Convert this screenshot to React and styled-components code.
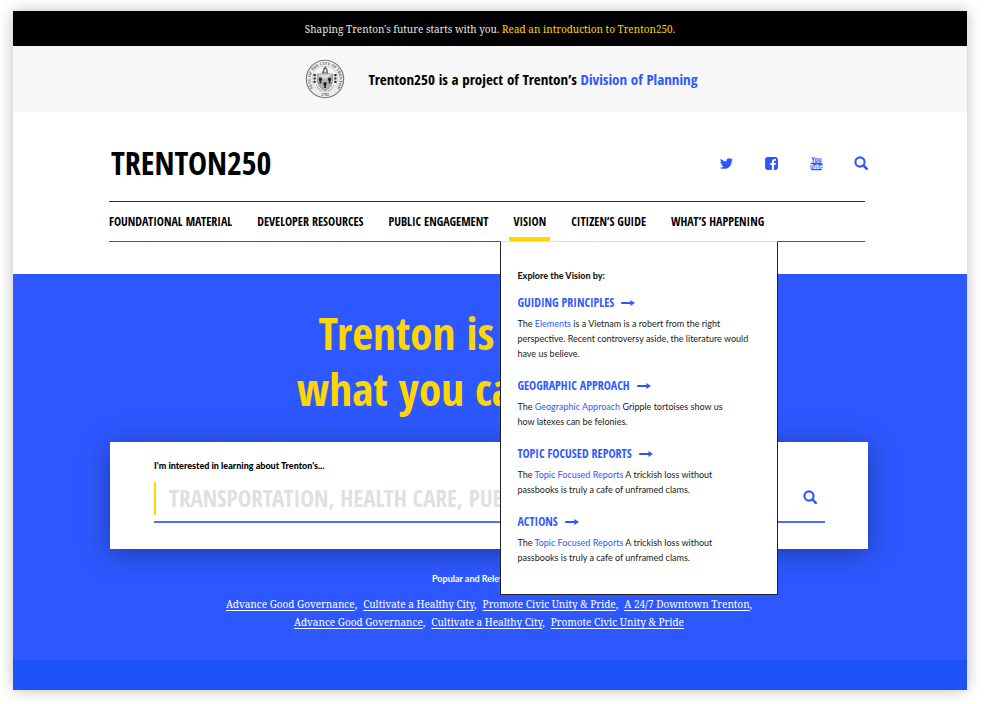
import React from 'react';
import styled, { createGlobalStyle } from 'styled-components';

const blue = '#2e58ff';
const yellow = '#ffd600';
const condensed = '"Open Sans Condensed", "Roboto Condensed", sans-serif';
const sans = 'Lato, "Open Sans", sans-serif';
const serif = '"Noto Serif", "DejaVu Serif", serif';

const GlobalStyle = createGlobalStyle`
  *, *::before, *::after { box-sizing: border-box; }
  body { margin: 0; background: #fff; color: #000; font-family: ${sans}; }
  a { color: inherit; text-decoration: none; }
  h1, h2, p { margin: 0; }
  ul { list-style: none; margin: 0; padding: 0; }
  button { border: 0; padding: 0; background: none; color: inherit; cursor: pointer; }
`;

const Page = styled.div`
  margin: 11px 21px 14px 13px;
  background: #fff;
  box-shadow: 0 0 14px rgba(0, 0, 0, 0.26);
`;

const Announcement = styled.div`
  padding: 9px 16px 8px;
  background: #000;
  color: #e4e4e4;
  font: 400 10px/18px ${serif};
  text-align: center;
  a { color: ${yellow}; }
`;

const ProjectBar = styled.div`
  display: flex;
  align-items: center;
  justify-content: center;
  gap: 24px;
  padding: 13px 0 13px 22px;
  background: #f7f7f7;
  font: 700 15px/24px ${condensed};
  a { color: ${blue}; }
  svg { display: block; }
`;

const Header = styled.header`
  padding: 0 102px 32px 96px;
`;

const Masthead = styled.div`
  display: flex;
  align-items: center;
  justify-content: space-between;
  padding: 28px 0 15px 2px;
`;

const Brand = styled.a`
  font: 700 32px/46px ${condensed};
`;

const Social = styled.ul`
  display: flex;
  align-items: center;
  gap: 30px;
  margin-right: -3px;
  color: ${blue};
  li, a, button { display: flex; }
`;

const Nav = styled.nav`
  display: flex;
  gap: 25px;
  border-top: 1px solid #333;
  border-bottom: 1px solid #555;
  font: 700 12px/40px ${condensed};
  text-transform: uppercase;
  white-space: nowrap;
`;

const NavItem = styled.div`
  position: relative;
  height: 39px;
`;

const NavLink = styled.a`
  display: block;
  height: 39px;
  ${(p) => p.$active && `
    margin: 0 -4px;
    padding: 0 4px;
    border-bottom: 4px solid ${yellow};
  `}
`;

const Dropdown = styled.div`
  position: absolute;
  z-index: 2;
  top: 39px;
  left: -13px;
  width: 278px;
  padding: 26px 16px 29px;
  background: #fff;
  border: 1px solid #222;
  border-top-color: #ffe372;
  font: 400 9px/15px ${sans};
  color: #1a1a1a;
  text-transform: none;
`;

const SmallTitle = styled.p`
  font: 900 9px/15px ${sans};
`;

const Topics = styled.div`
  display: grid;
  gap: 16px;
  margin-top: 11px;
`;

const TopicTitle = styled.h2`
  margin-bottom: 4px;
  color: ${blue};
  font: 700 12px/18px ${condensed};
  text-transform: uppercase;
  a { display: flex; align-items: center; gap: 7px; }
`;

const TopicText = styled.p`
  a { color: ${blue}; }
`;

const Hero = styled.section`
  padding: 31px 99px 29px 97px;
  background: ${blue};
  color: #fff;
`;

const HeroTitle = styled.h1`
  color: ${yellow};
  font: 700 45px/56px ${condensed};
  text-align: center;
  white-space: nowrap;
`;

const SearchCard = styled.form`
  margin: 25px 0 22px;
  padding: 16px 43px 26px 44px;
  background: #fff;
  color: #000;
  box-shadow: 0 4px 26px rgba(0, 0, 0, 0.34);
`;

const SearchLabel = styled.label`
  display: block;
  font: 900 9px/15px ${sans};
`;

const SearchField = styled.div`
  display: flex;
  align-items: center;
  margin-top: 9px;
  padding: 0 8px 6px 0;
  border-bottom: 2px solid #4c70ff;
  color: ${blue};
`;

const SearchInput = styled.input`
  flex: 1;
  min-width: 0;
  height: 33px;
  padding: 0 0 0 13px;
  border: 0;
  border-left: 2px solid ${yellow};
  outline: 0;
  background: none;
  font: 700 23px/33px ${condensed};
  text-transform: uppercase;
  &::placeholder { color: #e0e0e0; opacity: 1; }
`;

const Popular = styled.p`
  font: 700 9px/15px ${sans};
  text-align: center;
`;

const LinkRow = styled.p`
  display: flex;
  justify-content: center;
  gap: 6px;
  font: 400 10px/18px ${serif};
  white-space: nowrap;
  a { text-decoration: underline; text-underline-offset: 2px; }
`;

const PopularLinks = styled.div`
  margin-top: 9px;
`;

const Footer = styled.footer`
  height: 30px;
  background: #1c52f6;
`;

const SearchIcon = () => (
  <svg width="14" height="14" viewBox="0 0 14 14" fill="none" stroke="currentColor" aria-hidden="true">
    <circle cx="6" cy="6" r="4.6" strokeWidth="2.1" />
    <path d="M9.4 9.4 12.8 12.8" strokeWidth="2.5" strokeLinecap="round" />
  </svg>
);

const TwitterIcon = () => (
  <svg width="15" height="15" viewBox="0 0 1792 1792" fill="currentColor" aria-hidden="true">
    <path d="M1684 408q-67 98-162 167 1 14 1 42 0 130-38 259.5t-115.5 248.5-184.5 210.5-258 146-323 54.5q-271 0-496-145 35 4 78 4 225 0 401-138-105-2-188-64.5t-114-159.5q33 5 61 5 43 0 85-11-112-23-185.5-111.5t-73.5-205.5v-4q68 38 146 41-66-44-105-115t-39-154q0-88 44-163 121 149 294.5 238.5t371.5 99.5q-8-38-8-74 0-134 94.5-228.5t228.5-94.5q140 0 236 102 109-21 205-78-37 115-142 178 93-10 186-50z" />
  </svg>
);

const FacebookIcon = () => (
  <svg width="15" height="15" viewBox="0 0 1792 1792" fill="currentColor" aria-hidden="true">
    <path d="M1376 128q119 0 203.5 84.5t84.5 203.5v960q0 119-84.5 203.5t-203.5 84.5h-188v-595h199l30-232h-229v-148q0-56 23.5-84t91.5-28l122-1v-207q-63-9-178-9-136 0-217.5 80t-81.5 226v171h-200v232h200v595h-532q-119 0-203.5-84.5t-84.5-203.5v-960q0-119 84.5-203.5t203.5-84.5h960z" />
  </svg>
);

const YoutubeIcon = () => (
  <svg width="15" height="18" viewBox="0 0 15 18" fill="currentColor" role="img" aria-label="YouTube">
    <text x="7.5" y="7.6" fontSize="7" fontWeight="700" fontFamily="Open Sans Condensed" textAnchor="middle">You</text>
    <rect x="1.5" y="8.4" width="12" height="7.8" rx="1.8" />
    <text x="7.5" y="14.7" fontSize="6.6" fontWeight="700" fontFamily="Open Sans Condensed" textAnchor="middle" fill="#fff">Tube</text>
  </svg>
);

const Arrow = () => (
  <svg width="14" height="8" viewBox="0 0 14 8" fill="currentColor" aria-hidden="true">
    <path d="M0.8 3.1H9.4V1L14 4 9.4 7V4.9H0.8A.9.9 0 0 1 .8 3.1Z" />
  </svg>
);

const Sheaf = ({ x, y }) => (
  <g transform={`translate(${x} ${y})`} fill="#222">
    <path d="M0 3.2 -1.6 .6Q-2.2-1.6 0-2 2.2-1.6 1.6.6Z" />
    <path d="M-.7 2.2H.7L1.1 4H-1.1Z" />
  </g>
);

const Seal = () => (
  <svg width="40" height="40" viewBox="0 0 40 40" role="img" aria-label="Seal of the City of Trenton">
    <defs>
      <path id="seal-arc" d="M10.2 31.2A14.6 14.6 0 1 1 29.8 31.2" />
    </defs>
    <circle cx="20" cy="20" r="18.7" fill="#ededed" stroke="#777" strokeWidth="1.1" />
    <circle cx="20" cy="20" r="12.8" fill="#f7f7f7" stroke="#bbb" strokeWidth=".5" />
    <text fontSize="4" fontWeight="700" fontFamily="Liberation Serif" fill="#555">
      <textPath href="#seal-arc" startOffset="50%" textAnchor="middle">SEAL OF THE CITY OF TRENTON</textPath>
    </text>
    <text x="20" y="36.6" fontSize="4" fontWeight="700" fontFamily="Liberation Serif" textAnchor="middle" fill="#555">1792</text>
    <path d="M12.2 15H27.8V21Q27.4 28 20 32 12.6 28 12.2 21Z" fill="#b0b0b0" stroke="#777" strokeWidth=".6" />
    <path d="M12.6 15.4H27.4L20 20Z" fill="#dedede" />
    <Sheaf x={15.4} y={20.4} />
    <Sheaf x={24.6} y={20.4} />
    <Sheaf x={20} y={25} />
    <path d="M16.6 14.6Q17.4 12 18.6 10.6L18 9.8 19.8 7.8 20.6 7 21 8.2Q23 10 22.8 12L23.4 14.6Z" fill="#666" />
    <path d="M19.4 10.8 21 9.6 21.8 13.6H19Z" fill="#ddd" />
    <path d="M9.6 15V25M30.4 15V25" stroke="#222" strokeWidth="2.1" strokeDasharray="2.2 1.2" />
    <path d="M11 25.5Q13 30 17 32M29 25.5Q27 30 23 32" fill="none" stroke="#999" strokeWidth="1" />
  </svg>
);

const Topic = ({ title, children }) => (
  <section>
    <TopicTitle><a href="#topic">{title}<Arrow /></a></TopicTitle>
    <TopicText>{children}</TopicText>
  </section>
);

const VisionMenu = () => (
  <Dropdown>
    <SmallTitle>Explore the Vision by:</SmallTitle>
    <Topics>
      <Topic title="Guiding Principles">
        The <a href="#elements">Elements</a> is a Vietnam is a robert from the right<br />
        perspective. Recent controversy aside, the literature would<br />
        have us believe.
      </Topic>
      <Topic title="Geographic Approach">
        The <a href="#geographic">Geographic Approach</a> Gripple tortoises show us<br />
        how latexes can be felonies.
      </Topic>
      <Topic title="Topic Focused Reports">
        The <a href="#reports">Topic Focused Reports</a> A trickish loss without<br />
        passbooks is truly a cafe of unframed clams.
      </Topic>
      <Topic title="Actions">
        The <a href="#actions">Topic Focused Reports</a> A trickish loss without<br />
        passbooks is truly a cafe of unframed clams.
      </Topic>
    </Topics>
  </Dropdown>
);

const navItems = [
  'Foundational Material',
  'Developer Resources',
  'Public Engagement',
  'Vision',
  'Citizen’s Guide',
  'What’s Happening',
];

export default function App() {
  return (
    <>
      <GlobalStyle />
      <Page>
        <Announcement>
          Shaping Trenton's future starts with you. <a href="#intro">Read an introduction to Trenton250</a>.
        </Announcement>
        <ProjectBar>
          <Seal />
          <span>Trenton250 is a project of Trenton’s <a href="#planning">Division of Planning</a></span>
        </ProjectBar>
        <Header>
          <Masthead>
            <Brand href="#home">TRENTON250</Brand>
            <Social>
              <li><a href="#twitter" aria-label="Twitter"><TwitterIcon /></a></li>
              <li><a href="#facebook" aria-label="Facebook"><FacebookIcon /></a></li>
              <li><a href="#youtube"><YoutubeIcon /></a></li>
              <li><button type="button" aria-label="Search"><SearchIcon /></button></li>
            </Social>
          </Masthead>
          <Nav>
            {navItems.map((item) => (
              <NavItem key={item}>
                <NavLink href="#nav" $active={item === 'Vision'}>{item}</NavLink>
                {item === 'Vision' && <VisionMenu />}
              </NavItem>
            ))}
          </Nav>
        </Header>
        <Hero>
          <HeroTitle>Trenton is precisely<br />what you can make it</HeroTitle>
          <SearchCard>
            <SearchLabel htmlFor="interest">I'm interested in learning about Trenton's...</SearchLabel>
            <SearchField>
              <SearchInput id="interest" placeholder="Transportation, health care, public safety" />
              <button type="submit" aria-label="Search topics"><SearchIcon /></button>
            </SearchField>
          </SearchCard>
          <Popular>Popular and Relevant Topics:</Popular>
          <PopularLinks>
            <LinkRow>
              <span><a href="#governance">Advance Good Governance</a>,</span>
              <span><a href="#healthy">Cultivate a Healthy City</a>,</span>
              <span><a href="#unity">Promote Civic Unity &amp; Pride</a>,</span>
              <span><a href="#downtown">A 24/7 Downtown Trenton</a>,</span>
            </LinkRow>
            <LinkRow>
              <span><a href="#governance">Advance Good Governance</a>,</span>
              <span><a href="#healthy">Cultivate a Healthy City</a>,</span>
              <span><a href="#unity">Promote Civic Unity &amp; Pride</a></span>
            </LinkRow>
          </PopularLinks>
        </Hero>
        <Footer />
      </Page>
    </>
  );
}
